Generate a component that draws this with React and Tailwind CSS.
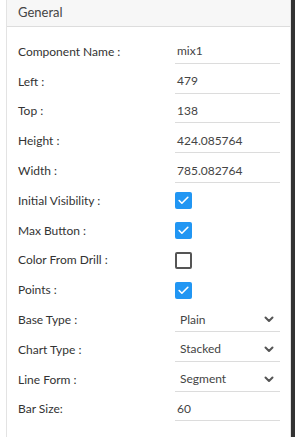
import { Check } from "lucide-react";

const rows = [
  { label: "Component Name :", type: "text", value: "mix1" },
  { label: "Left :", type: "text", value: "479" },
  { label: "Top :", type: "text", value: "138" },
  { label: "Height :", type: "text", value: "424.085764" },
  { label: "Width :", type: "text", value: "785.082764" },
  { label: "Initial Visibility :", type: "check", value: true },
  { label: "Max Button :", type: "check", value: true },
  { label: "Color From Drill :", type: "check", value: false },
  { label: "Points :", type: "check", value: true },
  { label: "Base Type :", type: "select", value: "Plain" },
  { label: "Chart Type :", type: "select", value: "Stacked" },
  { label: "Line Form :", type: "select", value: "Segment" },
  { label: "Bar Size:", type: "text", value: "60" },
];

function Chevron() {
  return (
    <svg width="10" height="7" viewBox="0 0 10 7" className="mr-[6px]">
      <polyline
        points="1.5,1.5 5,5 8.5,1.5"
        fill="none"
        stroke="#555"
        strokeWidth="2"
        strokeLinecap="round"
        strokeLinejoin="round"
      />
    </svg>
  );
}

function Field({ row }) {
  if (row.type === "check") {
    return row.value ? (
      <div className="w-[17px] h-[17px] rounded-[2px] bg-[#2196f3] flex items-center justify-center">
        <Check size={13} color="white" strokeWidth={3} />
      </div>
    ) : (
      <div className="w-[17px] h-[17px] rounded-[2px] border-2 border-[#555] bg-white" />
    );
  }

  if (row.type === "select") {
    return (
      <div className="w-[105px] h-[24px] border-b border-[#dcdcdc] flex items-center justify-between pl-[5px] text-[#444]">
        <span>{row.value}</span>
        <Chevron />
      </div>
    );
  }

  return (
    <div className="w-[105px] h-[24px] border-b border-[#dcdcdc] flex items-center pl-[2px] text-[#444]">
      {row.value}
    </div>
  );
}

export default function App() {
  return (
    <div className="w-[295px] h-[437px] bg-white flex font-['Lato','Liberation_Sans',sans-serif]">
      <div className="w-[6px]" />
      <div className="w-[285px] h-full border-x border-[#e3e3e3] flex flex-col">
        {/* HEADER */}
        <div className="h-[27px] bg-[#f7f7f7] border-b border-[#dddddd] flex items-center pl-[11px] text-[13px] text-[#444]">
          General
        </div>

        {/* ROWS */}
        <div className="pt-[10px] flex flex-col">
          {rows.map((row) => (
            <div key={row.label} className="h-[29.8px] flex items-center text-[12px]">
              <div className="w-[168px] pl-[11px] text-[#333]">{row.label}</div>
              <Field row={row} />
            </div>
          ))}
        </div>
      </div>
      <div className="w-[4px] bg-[#333]" />
    </div>
  );
}
